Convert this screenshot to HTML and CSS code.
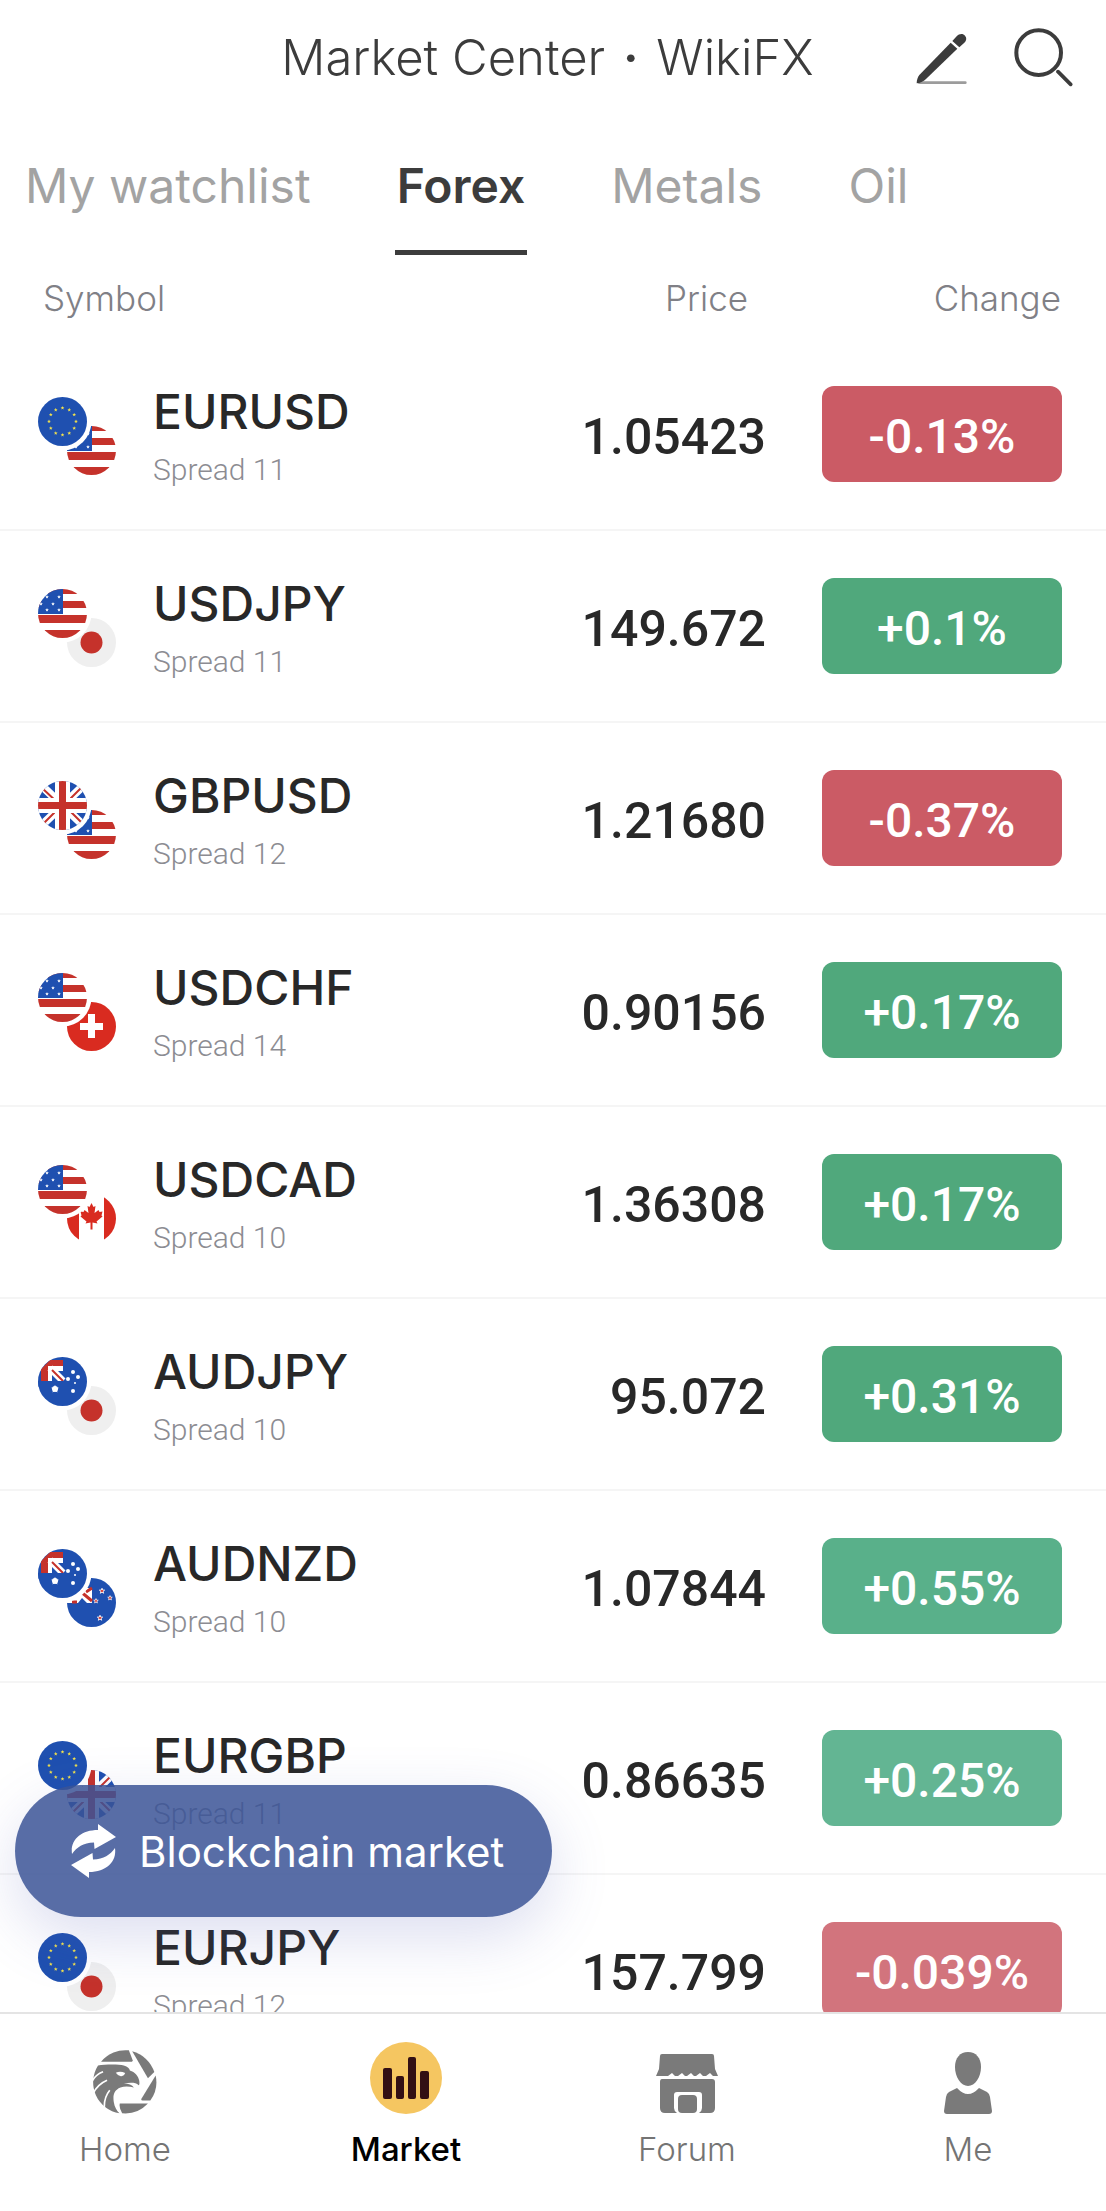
FILE: index.html
```html
<!DOCTYPE html>
<html lang="en">
<head>
  <meta charset="UTF-8">
  <meta name="viewport" content="width=device-width, initial-scale=1.0">
  <title>Market Center · WikiFX</title>
  <link rel="stylesheet" href="styles.css">
</head>
<body>
  <!-- flag sprites, 49x49 each -->
  <svg class="sprites" aria-hidden="true">
    <defs>
      <clipPath id="round"><circle cx="24.5" cy="24.5" r="24.5"/></clipPath>
      <path id="star" d="M0-10 2.6-3.4 9.5-3.1 4.1 1.3 5.9 8.1 0 4.3-5.9 8.1-4.1 1.3-9.5-3.1-2.6-3.4Z"/>
      <g id="eur" clip-path="url(#round)">
        <path fill="#1f50b0" d="M0 0h49v49H0z"/>
        <g id="eurStars" fill="#f2e14c"></g>
      </g>
      <g id="usd" clip-path="url(#round)">
        <path fill="#fff" d="M0 0h49v49H0z"/>
        <path fill="#c5322b" d="M0 0h49v5H0zM0 12h49v7H0zM0 26h49v8H0zM0 41h49v8H0z"/>
        <path fill="#1f50b0" d="M0 0h25v25H0z"/>
        <g fill="#fff">
          <use href="#star" transform="translate(9 8) scale(.19)"/>
          <use href="#star" transform="translate(21 8) scale(.19)"/>
          <use href="#star" transform="translate(15 15) scale(.19)"/>
          <use href="#star" transform="translate(3 15) scale(.19)"/>
          <use href="#star" transform="translate(9 21) scale(.19)"/>
          <use href="#star" transform="translate(21 21) scale(.19)"/>
        </g>
      </g>
      <g id="jpy">
        <circle cx="24.5" cy="24.5" r="24.5" fill="#efefef"/>
        <circle cx="24.5" cy="24.5" r="11" fill="#c5322b"/>
      </g>
      <g id="gbp" clip-path="url(#round)">
        <path fill="#1f50b0" d="M0 0h49v49H0z"/>
        <path stroke="#fff" stroke-width="8" d="M4 5 45 44M45 5 4 44"/>
        <path stroke="#c5322b" stroke-width="2" d="M4 7 20 22M30 28l15 15M45 5 31 19M19 29 5 43"/>
        <path fill="#fff" d="M17 0h15v49H17zM0 17h49v15H0z"/>
        <path fill="#c5322b" d="M21 0h7v49h-7zM0 21h49v7H0z"/>
      </g>
      <g id="chf">
        <circle cx="24.5" cy="24.5" r="24.5" fill="#d92b20"/>
        <path fill="#fff" d="M21 12h7v9h8v7h-8v8h-7v-8h-8v-7h8z"/>
      </g>
      <g id="cad" clip-path="url(#round)">
        <path fill="#fff" d="M0 0h49v49H0z"/>
        <path fill="#d92b20" d="M0 0h12v49H0zM37 0h12v49H37z"/>
        <path fill="#d92b20" d="M24.5 9l-2 4-2-1 1 7-4-3-1 2-3-.5 1 4-1 1 6 5-1 2 5-1v7h2v-7l5 1-1-2 6-5-1-1 1-4-3 .5-1-2-4 3 1-7-2 1z"/>
      </g>
      <g id="aud" clip-path="url(#round)">
        <path fill="#1f50b0" d="M0 0h49v49H0z"/>
        <path fill="#c5322b" d="M3 24V12l9-9h13v6H10v15z"/>
        <path fill="#fff" d="M10 9h15v5H14v10h-4z"/>
        <path stroke="#fff" stroke-width="7" d="M12 11 25 24"/>
        <path stroke="#c5322b" stroke-width="2" d="M14 13 25 24"/>
        <path fill="#1f50b0" d="M0 24h30v6H0z"/>
        <g fill="#fff">
          <circle cx="17" cy="32" r="3"/>
          <use href="#star" transform="translate(17 32) scale(.42)"/>
          <circle cx="35" cy="15" r="2"/>
          <circle cx="30" cy="22" r="2"/>
          <circle cx="40" cy="20" r="2"/>
          <circle cx="37" cy="26" r="1"/>
          <circle cx="35" cy="34" r="2"/>
        </g>
      </g>
      <g id="nzd" clip-path="url(#round)">
        <path fill="#1f50b0" d="M0 0h49v49H0z"/>
        <path fill="#fff" d="M0 10h25v15h-5l-5-5-4 5H0z"/>
        <path stroke="#c5322b" stroke-width="3" d="m13 13 12 10M19 14l6-4M5 24h5"/>
        <g fill="#d92b20" stroke="#fff" stroke-width="3">
          <use href="#star" transform="translate(35 13) scale(.28)"/>
          <use href="#star" transform="translate(29 23) scale(.24)"/>
          <use href="#star" transform="translate(43 20) scale(.24)"/>
          <use href="#star" transform="translate(33 40) scale(.28)"/>
        </g>
      </g>
    </defs>
  </svg>

  <header class="topbar">
    <h1 class="topbar__title">Market Center <span>·</span> WikiFX</h1>
    <div class="topbar__actions">
      <button type="button" aria-label="Edit">
        <svg width="52" height="52" viewBox="50 60 156 156">
          <path stroke="#9c9c9c" stroke-width="8" stroke-linecap="round" d="M60 212h138"/>
          <path fill="#3c3c3c" d="M52 214c0-10 4-20 8-25l94-97 20 18-94 91c-8 7-18 13-28 13z"/>
          <path fill="#3c3c3c" d="m159 87 13-14c8-9 20-8 25-2 6 7 4 15-2 21l-15 14z"/>
        </svg>
      </button>
      <button type="button" aria-label="Search">
        <svg width="59" height="59" viewBox="343 52 177 177" fill="none" stroke="#3c3c3c" stroke-linecap="round">
          <circle cx="417" cy="126" r="67" stroke-width="12"/>
          <path stroke-width="11" d="m475 183 38 38"/>
        </svg>
      </button>
    </div>
  </header>

  <nav class="tabs">
    <a href="#">My watchlist</a>
    <a href="#" class="active">Forex</a>
    <a href="#">Metals</a>
    <a href="#">Oil</a>
  </nav>

  <main class="market">
    <div class="market__scroll">
      <table class="quotes">
        <thead>
          <tr>
            <th class="symbol">Symbol</th>
            <th class="price">Price</th>
            <th class="change">Change</th>
          </tr>
        </thead>
        <tbody id="quotes"></tbody>
      </table>
    </div>
    <button type="button" class="switch">
      <svg width="46" height="54" viewBox="0 0 46 54" fill="#fff">
        <path id="arrow" d="M27 0 45 13 23.5 25 23 18.5C12 19 6 23 1 30-1 16 10 6 27 6z"/>
        <use href="#arrow" transform="rotate(180 22.5 27)"/>
      </svg>
      Blockchain market
    </button>
  </main>

  <nav class="tabbar">
    <a href="#">
      <svg width="64" height="64" viewBox="26 30 191 191" fill="#7a7a7a">
        <path d="M50 65a94 94 0 0 1 83-34l12 31-3 3z"/>
        <path d="M143 34a94 94 0 0 1 66 62l-19 18z"/>
        <path d="M213 106a94 94 0 0 1-16 75h-23q-6-1-3-6z"/>
        <path d="M106 190h84a94 94 0 0 1-77 29q-10-18-7-29z"/>
        <path d="M41 76c20-3 60-4 77 0 12 3 17 9 18 15 15 4 26 18 28 31 1 8 1 13-2 13-8-9-26-8-44-5 14 0 25 4 30 12-14-4-28-5-40 0-20 8-23 24-20 43 2 15 9 26 17 34A94 94 0 0 1 41 76z"/>
        <g fill="none" stroke="#fff" stroke-width="5">
          <path d="M22 126q10-22 34-31M26 160q14-28 42-40M60 204q-2-32 16-54"/>
        </g>
        <path fill="#fff" d="M94 98q14-6 28 1-3 10-13 9-9-1-15-10z"/>
      </svg>
      Home
    </a>
    <a href="#" class="active">
      <svg width="72" height="72" viewBox="0 0 72 72">
        <circle cx="36" cy="36" r="36" fill="#f5c661"/>
        <g fill="#331014">
          <rect x="13" y="26" width="9" height="31" rx="2"/>
          <rect x="26" y="34" width="8" height="23" rx="2"/>
          <rect x="38" y="15" width="8" height="42" rx="2"/>
          <rect x="50" y="29" width="9" height="28" rx="2"/>
        </g>
      </svg>
      Market
    </a>
    <a href="#">
      <svg width="62" height="60" viewBox="0 0 62 60" fill="#7a7a7a">
        <path d="M6 0h50q2 0 2 2l1 13 3 7h-5l-3-3-4 3h-3l-3-3-4 3h-2l-3-3-4 3h-2l-3-3-4 3h-3l-3-3-4 3H0l3-7L4 2q0-2 2-2z"/>
        <path d="M6 25h50q3 0 3 3v26q0 5-5 5H43q3-2 3-5V41q0-3-3-3H21q-3 0-3 3v13q0 3 3 5H9q-5 0-5-5V28q0-3 2-3z"/>
        <rect x="22" y="41" width="19" height="18" rx="4"/>
      </svg>
      Forum
    </a>
    <a href="#">
      <svg width="48" height="62" viewBox="0 0 48 62" fill="#7a7a7a">
        <path d="M24 0c8 0 13 6 13 15 0 10-6 19-13 19s-13-9-13-19C11 6 16 0 24 0z"/>
        <path d="M13 36q11 12 22 0l8 4q3 2 3 5l2 14q0 3-3 3H3q-3 0-3-3l2-14q0-3 3-5z"/>
      </svg>
      Me
    </a>
  </nav>

  <script>
    const pairs = [
      { base: 'EUR', quote: 'USD', spread: 11, price: '1.05423', change: '-0.13%', tone: 'down' },
      { base: 'USD', quote: 'JPY', spread: 11, price: '149.672', change: '+0.1%', tone: 'up' },
      { base: 'GBP', quote: 'USD', spread: 12, price: '1.21680', change: '-0.37%', tone: 'down' },
      { base: 'USD', quote: 'CHF', spread: 14, price: '0.90156', change: '+0.17%', tone: 'up' },
      { base: 'USD', quote: 'CAD', spread: 10, price: '1.36308', change: '+0.17%', tone: 'up' },
      { base: 'AUD', quote: 'JPY', spread: 10, price: '95.072', change: '+0.31%', tone: 'up' },
      { base: 'AUD', quote: 'NZD', spread: 10, price: '1.07844', change: '+0.55%', tone: 'up fading' },
      { base: 'EUR', quote: 'GBP', spread: 11, price: '0.86635', change: '+0.25%', tone: 'up faded' },
      { base: 'EUR', quote: 'JPY', spread: 12, price: '157.799', change: '-0.039%', tone: 'down faded' },
    ];

    // ring of twelve stars on the EU flag
    let stars = '';
    for (let i = 0; i < 12; i++) {
      const a = i * Math.PI / 6;
      const x = 24.5 + 13.5 * Math.sin(a);
      const y = 24.5 - 13.5 * Math.cos(a);
      stars += `<use href="#star" transform="translate(${x} ${y}) scale(.2)"/>`;
    }
    document.getElementById('eurStars').innerHTML = stars;

    const body = document.getElementById('quotes');
    pairs.forEach(p => {
      body.insertAdjacentHTML('beforeend',
        `<tr>
          <td>
            <div class="pair">
              <svg width="78" height="78" viewBox="0 0 78 78" aria-hidden="true">
                <use href="#${p.quote.toLowerCase()}" x="29" y="29"/>
                <circle cx="24.5" cy="24.5" r="29" fill="#fff"/>
                <use href="#${p.base.toLowerCase()}"/>
              </svg>
              <div>
                <p class="pair__name">${p.base}${p.quote}</p>
                <p class="pair__spread">Spread ${p.spread}</p>
              </div>
            </div>
          </td>
          <td class="price">${p.price}</td>
          <td class="change"><span class="badge ${p.tone}">${p.change}</span></td>
        </tr>`);
    });
  </script>
</body>
</html>
```
FILE: styles.css
```css
:root {
  --ink: #282828;
  --title: #3c3c3c;
  --muted: #8c8c92;
  --grey: #747474;
  --red: #cb5b65;
  --green: #50a87c;
}
* {
  box-sizing: border-box;
}
body {
  display: flex;
  flex-direction: column;
  height: 100vh;
  margin: 0;
  background: #fff;
  color: var(--ink);
  font-family: Inter, 'Liberation Sans', sans-serif;
}
a {
  text-decoration: none;
  color: inherit;
}
button {
  border: 0;
  padding: 0;
  background: none;
  font: inherit;
  cursor: pointer;
}
svg {
  display: block;
  flex-shrink: 0;
}
.sprites {
  position: absolute;
  width: 0;
  height: 0;
}

.topbar {
  display: grid;
  grid-template-columns: 1fr auto 1fr;
  align-items: center;
  padding: 0 33px 0 22px;
  height: 115px;
  flex-shrink: 0;
}
.topbar__title {
  grid-column: 2;
  margin: 0;
  font-size: 49px;
  font-weight: 300;
  color: var(--title);
}
.topbar__title span {
  margin: 0 4px;
  font-weight: 600;
}
.topbar__actions {
  display: flex;
  align-items: center;
  justify-content: flex-end;
  gap: 46px;
}

.tabs {
  display: flex;
  flex-shrink: 0;
  gap: 82px;
  padding-left: 23px;
  font-size: 48px;
  line-height: 56px;
  color: #a3a3a3;
}
.tabs a {
  padding: 43px 2px 36px;
  border-bottom: 5px solid transparent;
}
.tabs .active {
  border-color: var(--title);
  color: var(--title);
  font-weight: 600;
}

.market {
  position: relative;
  flex: 1;
  min-height: 0;
}
.market__scroll {
  height: 100%;
  overflow-y: auto;
  scrollbar-width: none;
}
.quotes {
  width: 100%;
  border-collapse: separate;
  border-spacing: 0;
}
.quotes th {
  height: 84px;
  padding: 2px 0 0;
  font-size: 35px;
  font-weight: 300;
  color: #808086;
}
.quotes th.symbol {
  padding-left: 43px;
  text-align: left;
}
.quotes th.price {
  padding-right: 18px;
  text-align: right;
}
.quotes th.change {
  padding-right: 45px;
  text-align: right;
}
.quotes td {
  height: 192px;
  padding: 0;
  border-bottom: 2px solid #f5f5f5;
}
.quotes td.price {
  padding-top: 6px;
  font-family: Roboto, sans-serif;
  font-size: 50px;
  font-weight: 500;
  text-align: right;
}
.quotes td.change {
  width: 340px;
  padding: 0 44px 0 56px;
}
.pair {
  display: flex;
  align-items: center;
  gap: 37px;
  padding: 4px 0 0 38px;
}
.pair p {
  margin: 0;
}
.pair__name {
  font-size: 48px;
  font-weight: 500;
  line-height: 56px;
}
.pair .pair__spread {
  margin-top: 12px;
  font-family: Roboto, sans-serif;
  font-size: 30px;
  font-weight: 300;
  line-height: 36px;
  color: var(--muted);
}
.badge {
  display: block;
  height: 96px;
  padding-top: 4px;
  border-radius: 12px;
  font-family: Roboto, sans-serif;
  font-size: 48px;
  font-weight: 500;
  line-height: 94px;
  text-align: center;
  color: #fff;
}
.down {
  background: var(--red);
}
.up {
  background: var(--green);
}
.up.fading {
  background: #59b08a;
}
.up.faded {
  background: #63b593;
}
.down.faded {
  background: #d2747d;
}

.switch {
  position: absolute;
  left: 15px;
  bottom: 95px;
  display: flex;
  align-items: center;
  gap: 22px;
  height: 132px;
  padding: 0 48px 0 56px;
  border-radius: 66px;
  background: rgba(59, 83, 150, 0.85);
  box-shadow: 0 20px 60px rgba(80, 90, 180, 0.2);
  font-size: 42px;
  color: #fff;
  white-space: nowrap;
}

.tabbar {
  display: flex;
  justify-content: space-between;
  flex-shrink: 0;
  height: 199px;
  padding: 0 38px 0 25px;
  border-top: 2px solid #e4e4e4;
  font-size: 33px;
  font-weight: 300;
  line-height: 40px;
  color: var(--grey);
}
.tabbar a {
  display: flex;
  flex-direction: column;
  align-items: center;
  justify-content: flex-end;
  gap: 15px;
  width: 200px;
  padding-bottom: 42px;
}
.tabbar .active {
  color: #000;
  font-weight: 500;
}
```
